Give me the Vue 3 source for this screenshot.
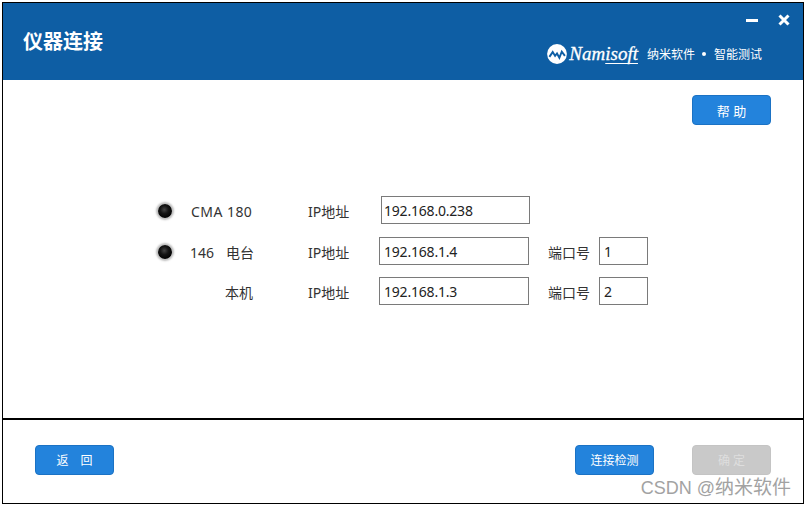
<template>
  <div class="page">
    <div class="window">
      <header class="head">
        <h1 class="title">仪器连接</h1>
        <div class="head-right">
          <div class="win-btns">
            <span class="min"></span>
            <svg class="close" width="12" height="12" viewBox="0 0 12 12">
              <path d="M1.5 1.5 L10.5 10.5 M10.5 1.5 L1.5 10.5" stroke="#fff" stroke-width="3" />
            </svg>
          </div>
          <div class="brand">
            <svg class="logo" width="20" height="20" viewBox="0 0 21 21">
              <circle cx="10.5" cy="10.5" r="10.4" fill="#fff" />
              <path d="M2.5 13.5 L6 8.5 L8.5 12.5 L10.5 10 L13 14.5 L15.5 8 L18.8 12.5" fill="none" stroke="#0e5ea4" stroke-width="2" />
            </svg>
            <span class="brand-name">Nam<span class="ul">isoft</span></span>
            <span class="slogan">纳米软件</span>
            <span class="dot"></span>
            <span class="slogan">智能测试</span>
          </div>
        </div>
      </header>

      <main class="body">
        <div class="help-row">
          <button class="btn help">帮 助</button>
        </div>

        <div class="form">
          <div v-for="(r, i) in rows" :key="i" :class="['row', { first: i === 0 }]">
            <div :class="['device', { right: !r.led }]">
              <span v-if="r.led" class="led"></span>
              <span :class="['name', r.cls]">{{ r.name }}</span>
              <span v-if="r.sub" class="sub">{{ r.sub }}</span>
            </div>
            <label class="lbl">IP地址</label>
            <div class="field ip">{{ r.ip }}</div>
            <template v-if="r.port">
              <label class="lbl port-lbl">端口号</label>
              <div class="field port">{{ r.port }}</div>
            </template>
          </div>
        </div>
      </main>

      <footer class="foot">
        <button class="btn">返　回</button>
        <div class="foot-right">
          <button class="btn">连接检测</button>
          <button class="btn off">确 定</button>
        </div>
      </footer>

      <div class="watermark">CSDN @<span class="wm-cn">纳米软件</span></div>
    </div>
  </div>
</template>

<script setup>
const rows = [
  { led: true, name: 'CMA 180', cls: 'cma', ip: '192.168.0.238' },
  { led: true, name: '146', sub: '电台', ip: '192.168.1.4', port: '1' },
  { led: false, name: '本机', ip: '192.168.1.3', port: '2' }
]
</script>

<style>
html, body { margin: 0; background: #fff; }
</style>

<style scoped>
.page {
  width: 806px;
  height: 506px;
  padding: 2px;
  box-sizing: border-box;
  font-family: "Noto Sans", "Noto Sans CJK SC", sans-serif;
  color: #333;
  font-size: 14px;
}
.window {
  position: relative;
  height: 100%;
  box-sizing: border-box;
  border: 1px solid #000;
  display: flex;
  flex-direction: column;
  background: #fff;
}

.head {
  height: 77px;
  flex: none;
  background: #0e5ea4;
  color: #fff;
  display: flex;
  justify-content: space-between;
}
.title {
  margin: 26px 0 0 20px;
  font-size: 20px;
  line-height: 26px;
  font-weight: 700;
}
.head-right {
  display: flex;
  flex-direction: column;
  align-items: flex-end;
}
.win-btns {
  display: flex;
  align-items: center;
  gap: 20px;
  padding: 11px 13px 0 0;
  height: 12px;
}
.min { width: 12px; height: 3px; background: #fff; }
.close { display: block; }
.brand {
  display: flex;
  align-items: center;
  margin: 16px 41px 0 0;
  height: 24px;
}
.logo { display: block; margin-right: 2px; }
.brand-name {
  font-family: "Liberation Serif", serif;
  font-style: italic;
  font-size: 19px;
  margin-right: 9px;
  -webkit-text-stroke: 0.3px #fff;
}
.ul {
  text-decoration: underline;
  text-decoration-thickness: 1px;
  text-underline-offset: 3px;
  text-decoration-skip-ink: none;
}
.slogan { font-size: 12px; }
.dot {
  width: 4px;
  height: 4px;
  border-radius: 50%;
  background: #fff;
  margin: 0 8px 0 7px;
}

.body { flex: 1; min-height: 0; }
.help-row {
  display: flex;
  justify-content: flex-end;
  padding: 15px 32px 0 0;
}
.btn {
  width: 79px;
  height: 30px;
  padding: 0;
  box-sizing: border-box;
  border: 1px solid #1b72c4;
  border-radius: 4px;
  background: #2383dc;
  color: #fff;
  font-family: inherit;
  font-size: 12px;
}
.btn.help { font-size: 13px; }
.btn.off {
  background: #c9c9c9;
  border-color: #c4c4c4;
  color: #dedede;
}

.form {
  margin: 71px 0 0 152px;
}
.row {
  display: grid;
  grid-template-columns: 153px 71px 150px 19px 51px 49px;
  height: 28px;
  align-items: center;
  margin-bottom: 12px;
}
.row.first { margin-bottom: 13px; }
.device { display: flex; align-items: center; padding-top: 2px; }
.device.right { padding-left: 70px; }
.led {
  width: 14px;
  height: 14px;
  border-radius: 50%;
  margin: 0 18px 0 3px;
  background: radial-gradient(circle at 45% 40%, #444 0, #151515 35%, #000 75%);
  box-shadow: 0 0 2px 2px #bdbdbd;
}
.name.cma { margin-left: 1px; letter-spacing: 0.45px; }
.sub { margin-left: 12px; }
.lbl { grid-column: 2; padding-top: 1px; }
.port-lbl { grid-column: 5; }
.field {
  height: 28px;
  box-sizing: border-box;
  border: 1px solid #7a7a7a;
  padding: 0 4px;
  line-height: 27px;
  color: #222;
  letter-spacing: -0.2px;
}
.ip { grid-column: 3; }
.first .ip { margin-left: 2px; width: 149px; padding-left: 2px; }
.port { grid-column: 6; }

.foot {
  height: 85px;
  flex: none;
  box-sizing: border-box;
  border-top: 2px solid #000;
  display: flex;
  justify-content: space-between;
  padding: 25px 32px 0 32px;
}
.foot-right { display: flex; gap: 38px; }

.watermark {
  position: absolute;
  right: 12px;
  bottom: 3px;
  font-family: "Liberation Sans", "Noto Sans CJK SC", sans-serif;
  font-size: 18px;
  line-height: 24px;
  color: #8c8c8c;
  opacity: 0.8;
}
.wm-cn { font-size: 19px; }
</style>
